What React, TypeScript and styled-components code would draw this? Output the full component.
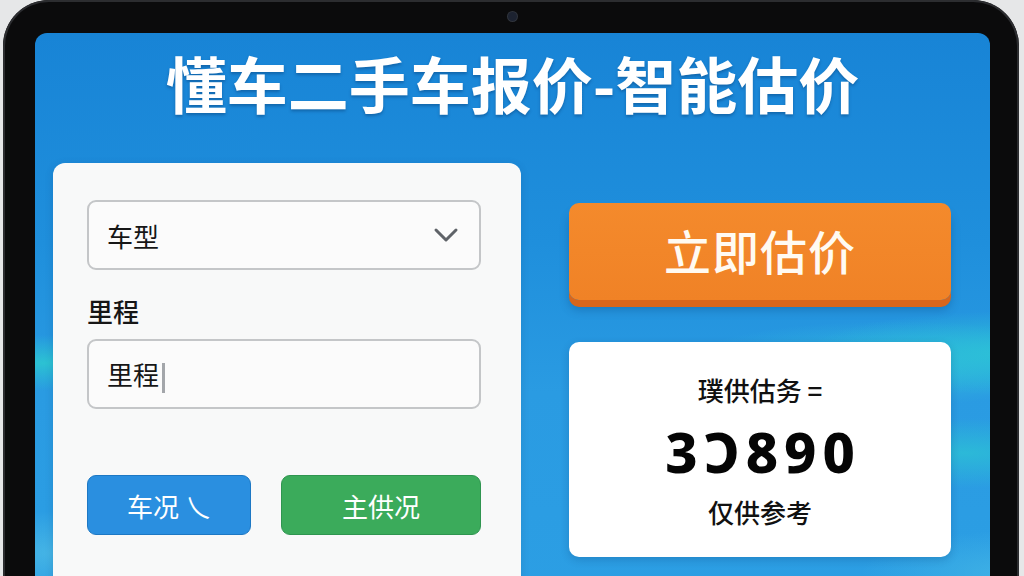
import React from 'react'
import styled, { createGlobalStyle } from 'styled-components'

const Global = createGlobalStyle`
  html, body {
    margin: 0;
    padding: 0;
    height: 576px;
    overflow: hidden;
    background: #e6e7e8;
  }
  * { box-sizing: border-box; }
`

const CJK = `"Noto Sans CJK SC", "Noto Sans", sans-serif`

const Frame = styled.div`
  margin-left: 3px;
  width: 1016px;
  height: 620px;
  background: #0b0b0c;
  border-radius: 46px 46px 0 0;
  padding: 33px 29px 0 32px;
  position: relative;
  box-shadow: inset 0 0 0 2px #2c2d30;
`

const Camera = styled.span`
  position: absolute;
  left: 505px;
  top: 12px;
  width: 9px;
  height: 9px;
  border-radius: 50%;
  background: #1c2230;
  box-shadow: 0 0 0 1px #30343c;
`

const Screen = styled.div`
  height: 600px;
  border-radius: 12px 12px 0 0;
  overflow: hidden;
  display: flex;
  flex-direction: column;
  align-items: stretch;
  font-family: ${CJK};
  background:
    radial-gradient(ellipse 260px 40px at 10px 330px, rgba(44, 196, 210, 0.95), transparent 70%),
    radial-gradient(ellipse 300px 60px at 980px 320px, rgba(44, 196, 214, 0.9), transparent 70%),
    radial-gradient(ellipse 240px 50px at 930px 420px, rgba(44, 190, 214, 0.85), transparent 70%),
    radial-gradient(ellipse 300px 60px at 860px 330px, rgba(50, 196, 220, 0.75), transparent 70%),
    radial-gradient(ellipse 200px 60px at 20px 520px, rgba(80, 190, 230, 0.7), transparent 70%),
    radial-gradient(ellipse 220px 60px at 980px 540px, rgba(70, 185, 230, 0.7), transparent 70%),
    linear-gradient(180deg, #1884d6 0%, #1f8fdc 35%, #2a9be2 60%, #2c9fe4 100%);
`

const Title = styled.h1`
  margin: 0;
  height: 130px;
  display: flex;
  align-items: flex-start;
  justify-content: center;
  padding-top: 10px;
  color: #ffffff;
  font-family: ${CJK};
  font-weight: 700;
  font-size: 61px;
  line-height: 80px;
  letter-spacing: 0;
  text-shadow: 0 2px 3px rgba(0, 40, 90, 0.35);
`

const Body = styled.div`
  display: grid;
  grid-template-columns: 468px 382px;
  column-gap: 48px;
  padding-left: 18px;
`

const FormCard = styled.div`
  background: #f8f9f9;
  border-radius: 12px;
  height: 440px;
  padding: 37px 40px 0 34px;
  display: flex;
  flex-direction: column;
  box-shadow: 0 2px 8px rgba(0, 40, 90, 0.15);
`

const Field = styled.div`
  height: 70px;
  flex: 0 0 70px;
  border: 2px solid #c4c6c8;
  border-radius: 9px;
  background: #fbfbfb;
  display: flex;
  align-items: center;
  justify-content: space-between;
  padding: 0 20px 0 18px;
  font-size: 26px;
  color: #161616;
`

const Caret = styled.span`
  display: inline-block;
  width: 3px;
  height: 30px;
  margin-left: 3px;
  background: #a3a6aa;
  vertical-align: middle;
`

const Label = styled.div`
  margin: 25px 0 12px;
  font-size: 26px;
  font-weight: 500;
  color: #161616;
  line-height: 32px;
`

const ButtonRow = styled.div`
  margin-top: 66px;
  display: grid;
  grid-template-columns: 164px 200px;
  column-gap: 30px;
`

const ActionButton = styled.div<{ $tone: 'blue' | 'green' }>`
  height: 60px;
  border-radius: 9px;
  display: flex;
  align-items: center;
  justify-content: center;
  color: #fff;
  font-size: 26px;
  background: ${p => (p.$tone === 'blue' ? '#2a8fe0' : '#3bab5b')};
  border: 1px solid ${p => (p.$tone === 'blue' ? '#1d78c4' : '#2f9550')};
`

const RightCol = styled.div`
  padding-top: 40px;
  display: flex;
  flex-direction: column;
  gap: 42px;
`

const EstimateButton = styled.div`
  height: 97px;
  border-radius: 10px;
  background: linear-gradient(180deg, #f48a2c 0%, #f08226 100%);
  box-shadow: 0 7px 0 #d8661c, 0 10px 10px rgba(0, 40, 90, 0.25);
  display: flex;
  align-items: center;
  justify-content: center;
  padding-bottom: 4px;
  color: #fffaf2;
  font-size: 47px;
  font-weight: 500;
  letter-spacing: 1px;
`

const ResultCard = styled.div`
  height: 215px;
  border-radius: 10px;
  background: #ffffff;
  display: flex;
  flex-direction: column;
  align-items: center;
  justify-content: center;
  gap: 14px;
  padding-top: 2px;
  color: #111;
  box-shadow: 0 3px 8px rgba(0, 40, 90, 0.2);
`

const ResultText = styled.div`
  font-size: 26px;
  line-height: 34px;
  font-weight: 500;
`

const Price = styled.div`
  font-family: "Noto Sans", "DejaVu Sans", sans-serif;
  font-weight: 800;
  font-size: 56px;
  line-height: 60px;
  letter-spacing: 6px;
  margin-right: -6px;
  color: #050505;
`

function Chevron() {
  return (
    <svg width="26" height="16" viewBox="0 0 26 16" fill="none">
      <path d="M3 3l10 10L23 3" stroke="#5f6368" strokeWidth="3" strokeLinecap="round" strokeLinejoin="round" />
    </svg>
  )
}

export default function App() {
  return (
    <>
      <Global />
      <Frame>
        <Camera />
        <Screen>
          <Title>懂车二手车报价-智能估价</Title>
          <Body>
            <FormCard>
              <Field>
                <span>车型</span>
                <Chevron />
              </Field>
              <Label>里程</Label>
              <Field>
                <span>
                  里程<Caret />
                </span>
              </Field>
              <ButtonRow>
                <ActionButton $tone="blue">车况 乀</ActionButton>
                <ActionButton $tone="green">主供况</ActionButton>
              </ButtonRow>
            </FormCard>
            <RightCol>
              <EstimateButton>立即估价</EstimateButton>
              <ResultCard>
                <ResultText>璞供估务 =</ResultText>
                <Price>3Ɔ890</Price>
                <ResultText>仅供参考</ResultText>
              </ResultCard>
            </RightCol>
          </Body>
        </Screen>
      </Frame>
    </>
  )
}
